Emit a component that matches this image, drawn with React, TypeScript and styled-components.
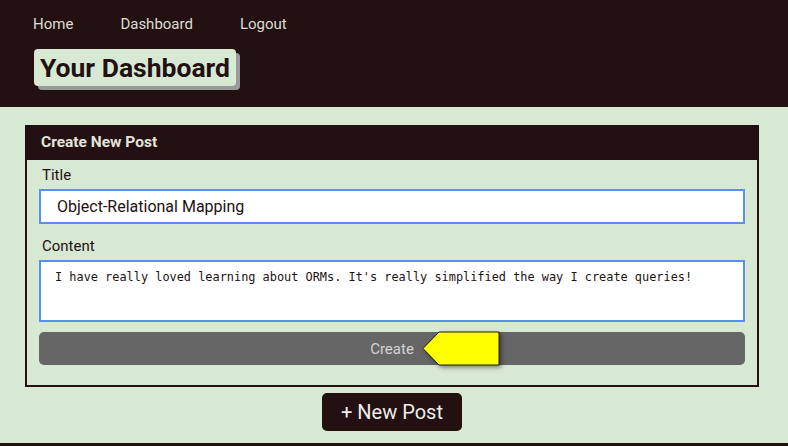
import React from "react";
import styled, { createGlobalStyle } from "styled-components";

const Global = createGlobalStyle`
  html, body { margin: 0; padding: 0; }
  body {
    background: #d8e9d3;
    font-family: Roboto, "Liberation Sans", Arial, sans-serif;
    width: 788px;
    height: 446px;
    overflow: hidden;
  }
`;

const Page = styled.div`
  display: flex;
  flex-direction: column;
  height: 446px;
`;

const Header = styled.header`
  background: #231112;
  height: 107px;
  box-sizing: border-box;
  padding: 14px 0 0 33px;
  display: flex;
  flex-direction: column;
  align-items: flex-start;
`;

const Nav = styled.nav`
  display: flex;
  gap: 47px;
`;

const NavLink = styled.a`
  color: #dcdcd4;
  font-size: 15px;
  line-height: 20px;
  text-decoration: none;
`;

const TitleBadge = styled.h1`
  margin: 15px 0 0 1px;
  background: #d8e9d3;
  color: #231112;
  font-size: 26.5px;
  font-weight: 700;
  line-height: 37px;
  padding: 0 6px 0 6px;
  border-radius: 4px;
  box-shadow: 4px 4px 0 #9a9a9a;
`;

const Main = styled.main`
  flex: 1;
  padding: 18px 29px 0 25px;
  display: flex;
  flex-direction: column;
  align-items: center;
`;

const Card = styled.section`
  width: 734px;
  box-sizing: border-box;
  border: 2px solid #231112;
  display: flex;
  flex-direction: column;
`;

const CardHead = styled.div`
  background: #231112;
  color: #e4e4dc;
  font-size: 15.5px;
  font-weight: 700;
  height: 33px;
  line-height: 31px;
  padding-left: 14px;
`;

const CardBody = styled.form`
  padding: 5px 12px 20px 12px;
  display: flex;
  flex-direction: column;
`;

const Label = styled.label<{ $top?: number }>`
  color: #231112;
  font-size: 15px;
  line-height: 20px;
  margin: ${(p) => p.$top ?? 0}px 0 4px 3px;
`;

const TextInput = styled.input`
  height: 35px;
  box-sizing: border-box;
  border: 2px solid #5a8ef0;
  background: #fff;
  font-family: Roboto, "Liberation Sans", Arial, sans-serif;
  font-size: 16px;
  color: #231112;
  padding: 0 16px;
  outline: none;
`;

const TextArea = styled.textarea`
  height: 62px;
  box-sizing: border-box;
  border: 2px solid #5a8ef0;
  background: #fff;
  font-family: "DejaVu Sans Mono", "Liberation Mono", monospace;
  font-size: 11.9px;
  color: #231112;
  padding: 8px 14px 6px;
  resize: none;
  outline: none;
`;

const ButtonRow = styled.div`
  position: relative;
  margin-top: 10px;
`;

const CreateButton = styled.button`
  width: 100%;
  height: 33px;
  border: none;
  border-radius: 5px;
  background: #666666;
  color: #d2d2d2;
  font-family: Roboto, "Liberation Sans", Arial, sans-serif;
  font-size: 15px;
`;

const Pointer = styled.svg`
  position: absolute;
  left: 383px;
  top: -1px;
  filter: drop-shadow(2px 2px 2px rgba(0, 0, 0, 0.45));
`;

const NewPostButton = styled.button`
  margin-top: 6px;
  height: 38px;
  padding: 0 19px;
  border: none;
  border-radius: 5px;
  background: #231112;
  color: #eeeeea;
  font-family: Roboto, "Liberation Sans", Arial, sans-serif;
  font-size: 20px;
`;

const BottomBar = styled.div`
  height: 3px;
  background: #231112;
`;

export default function App() {
  return (
    <>
      <Global />
      <Page>
        <Header>
          <Nav>
            <NavLink href="#">Home</NavLink>
            <NavLink href="#">Dashboard</NavLink>
            <NavLink href="#">Logout</NavLink>
          </Nav>
          <TitleBadge>Your Dashboard</TitleBadge>
        </Header>
        <Main>
          <Card>
            <CardHead>Create New Post</CardHead>
            <CardBody onSubmit={(e) => e.preventDefault()}>
              <Label>Title</Label>
              <TextInput defaultValue="Object-Relational Mapping" />
              <Label $top={12}>Content</Label>
              <TextArea defaultValue="I have really loved learning about ORMs. It's really simplified the way I create queries!" />
              <ButtonRow>
                <CreateButton type="submit">Create</CreateButton>
                <Pointer width="80" height="36" viewBox="0 0 80 36">
                  <polygon
                    points="1,17.5 17,1 77,1 77,34 17,34"
                    fill="#ffff00"
                    stroke="#1a1a1a"
                    strokeWidth="1"
                  />
                </Pointer>
              </ButtonRow>
            </CardBody>
          </Card>
          <NewPostButton>+ New Post</NewPostButton>
        </Main>
        <BottomBar />
      </Page>
    </>
  );
}
